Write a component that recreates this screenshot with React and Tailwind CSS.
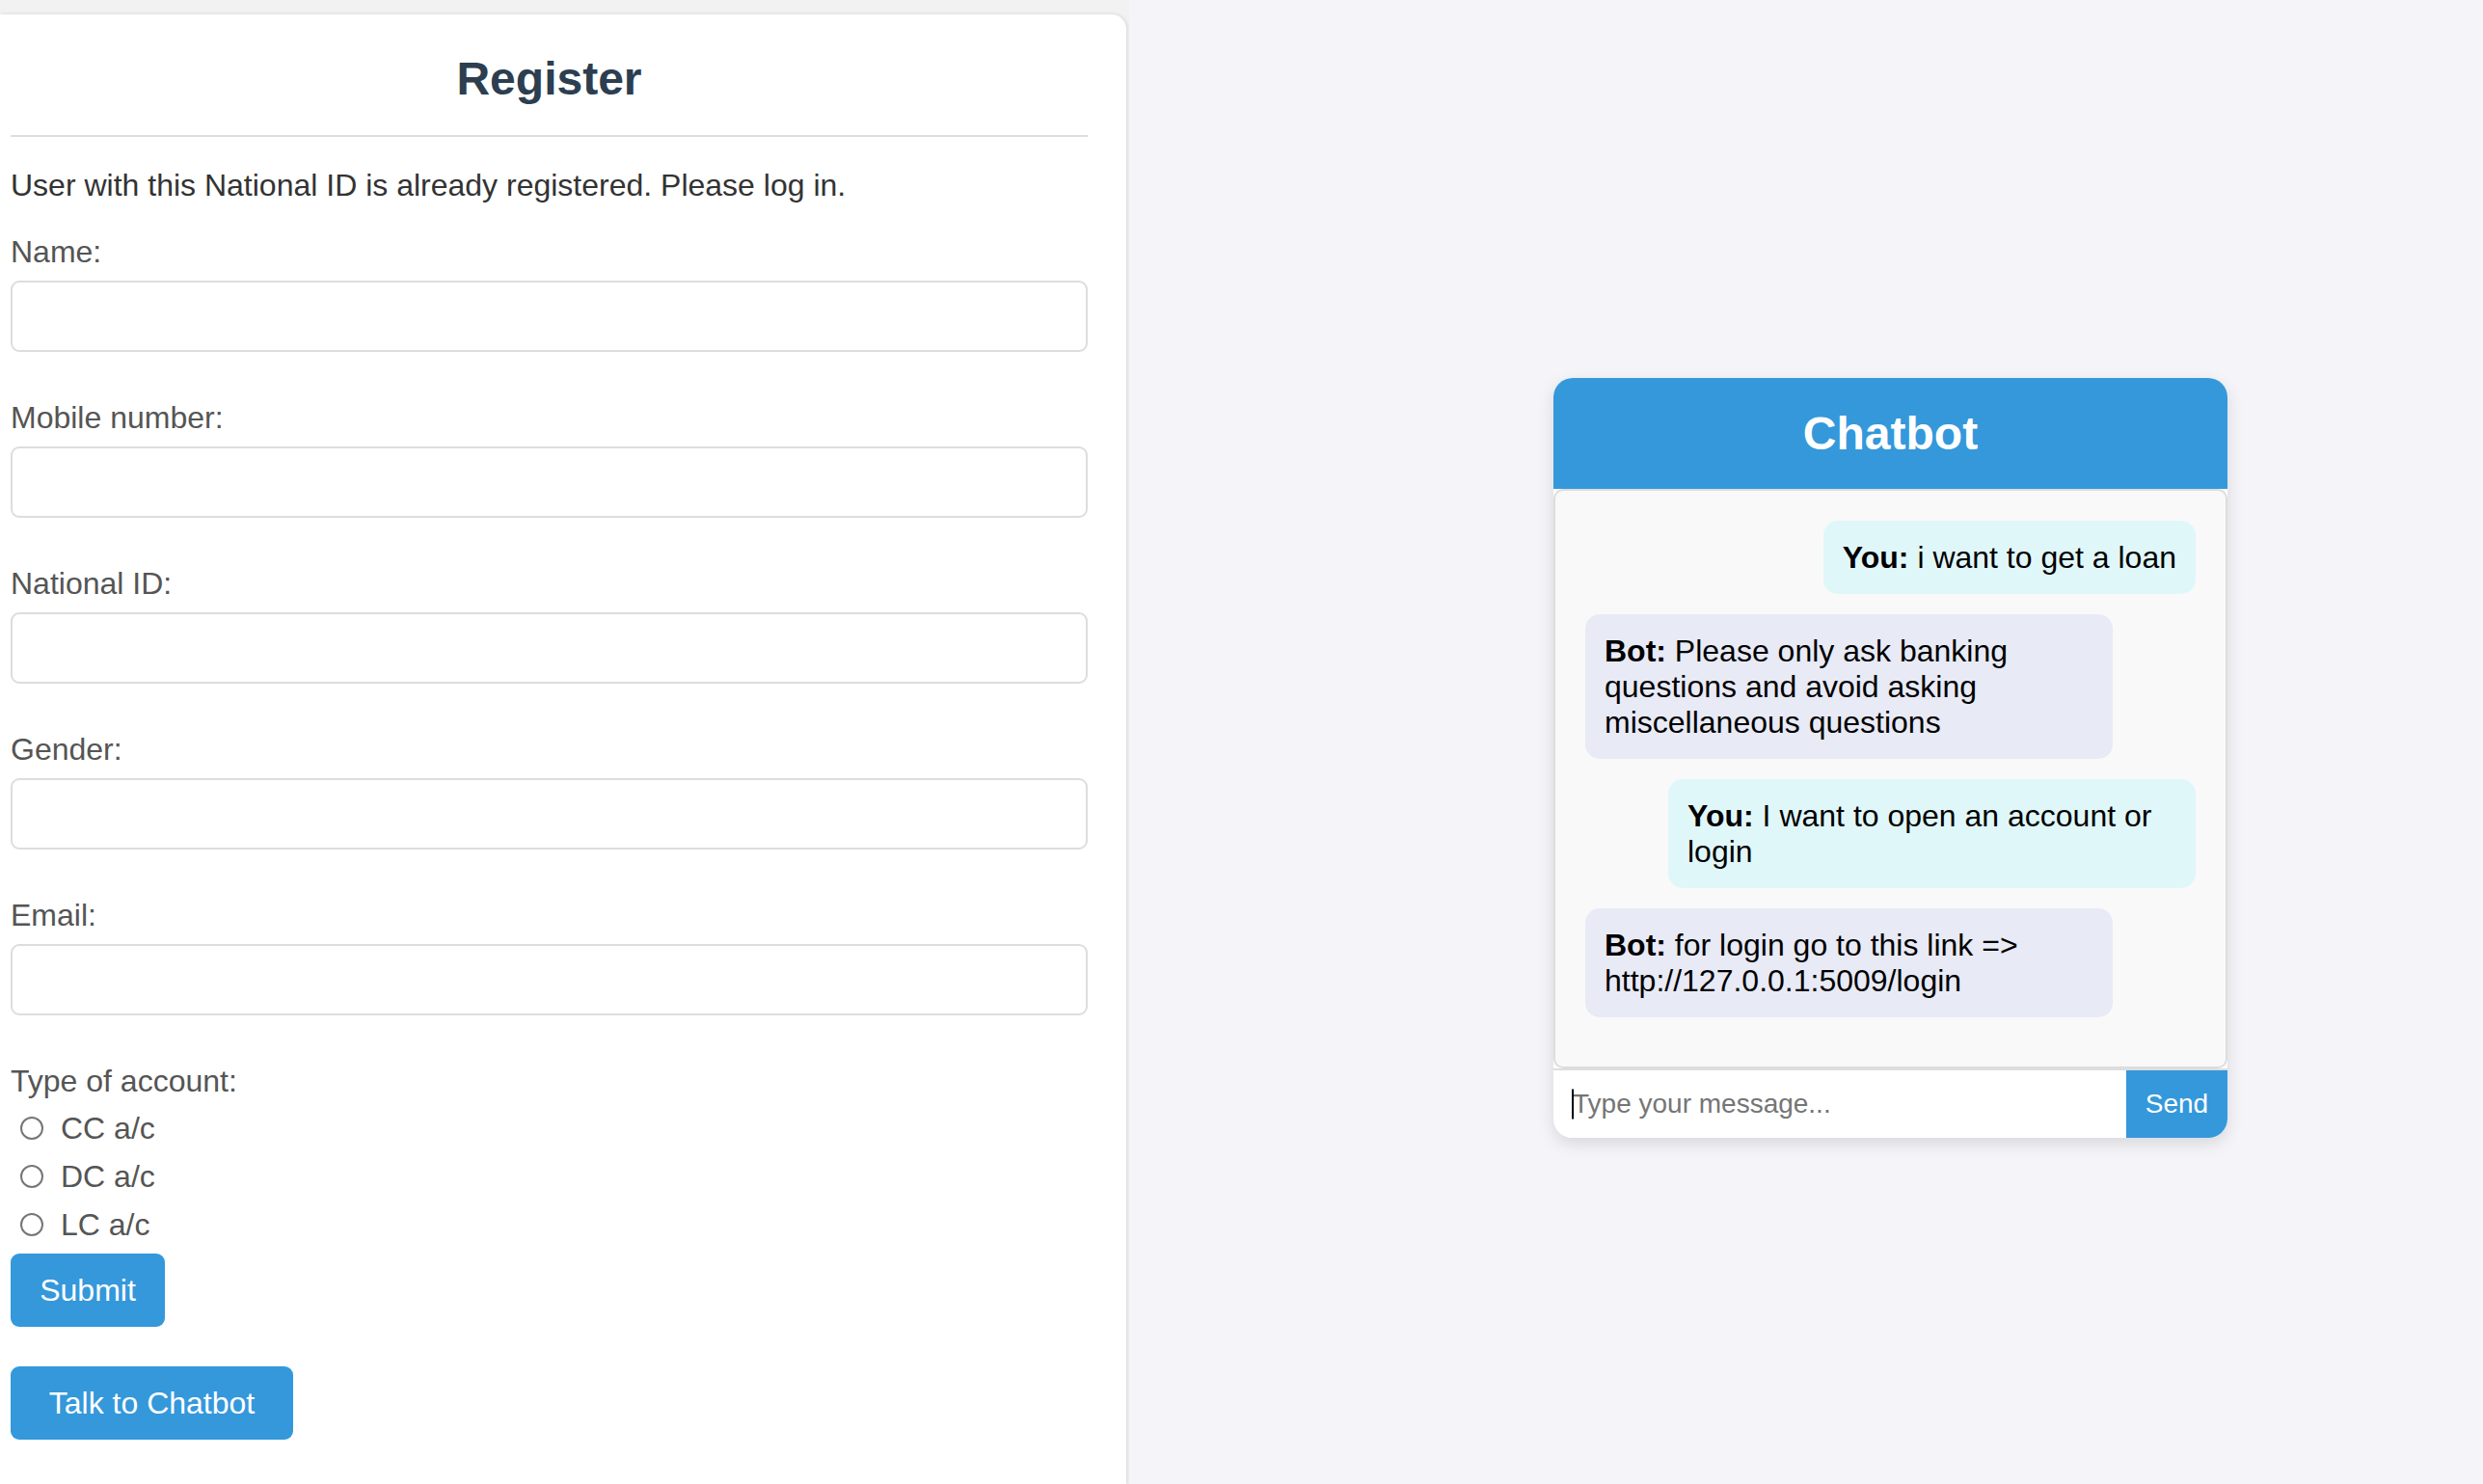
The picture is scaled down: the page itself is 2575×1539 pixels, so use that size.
export default function App() {
  const fields = ["Name:", "Mobile number:", "National ID:", "Gender:", "Email:"];
  const accounts = ["CC a/c", "DC a/c", "LC a/c"];
  return (
    <div className="flex h-[1539px] w-[2575px] overflow-hidden font-['Liberation_Sans',Arial,sans-serif]">
      {/* Left: register form */}
      <div className="w-[1171px] shrink-0 bg-[#f2f2f2] pt-[15px]">
        <div className="h-full w-[1168px] rounded-tr-[15px] bg-white pl-[11px] pr-[40px] pt-[40px] shadow-[1px_0_4px_rgba(0,0,0,0.12)]">
          <h2 className="border-b-2 border-[#ddd] pb-[32px] text-center text-[48px] font-bold leading-[53px] text-[#2c3e50]">
            Register
          </h2>
          <p className="mt-[33px] text-[32px] leading-[35px] text-[#333]">
            User with this National ID is already registered. Please log in.
          </p>
          <div className="mt-[34px] flex flex-col gap-[51px]">
            {fields.map((f) => (
              <div key={f} className="flex flex-col">
                <label className="text-[32px] leading-[35px] text-[#555]">{f}</label>
                <input
                  type="text"
                  className="mt-[12px] h-[74px] w-full rounded-[9px] border-2 border-[#ddd] bg-white px-[18px] text-[32px] outline-none"
                />
              </div>
            ))}
          </div>
          <div className="mt-[51px] text-[32px] leading-[35px] text-[#555]">Type of account:</div>
          <div className="mt-[6px] flex flex-col">
            {accounts.map((a) => (
              <label key={a} className="flex h-[50px] items-center text-[32px] leading-[35px] text-[#555]">
                <span className="ml-[10px] mr-[18px] inline-block h-[24px] w-[24px] rounded-full border-2 border-[#767676] bg-white" />
                {a}
              </label>
            ))}
          </div>
          <button className="mt-[5px] block h-[76px] w-[160px] rounded-[9px] bg-[#3498db] text-[32px] leading-[35px] text-white">
            Submit
          </button>
          <button className="mt-[41px] block h-[76px] w-[293px] rounded-[9px] bg-[#3498db] text-[32px] leading-[35px] text-white">
            Talk to Chatbot
          </button>
        </div>
      </div>

      {/* Right: chatbot */}
      <div className="flex-1 bg-[#f4f4f9] pl-[440px] pt-[392px]">
        <div className="flex w-[699px] flex-col overflow-hidden rounded-[20px] bg-white shadow-[0_6px_18px_rgba(0,0,0,0.12)]">
          <div className="flex h-[115px] items-center justify-center bg-[#3498db] text-[48px] font-bold leading-[48px] text-white">
            Chatbot
          </div>
          <div className="flex h-[601px] flex-col gap-[21px] rounded-[10px] border-2 border-[#ddd] bg-[#f9f9f9] p-[31px] text-[32px] leading-[37px] text-black">
            <div className="max-w-[547px] self-end rounded-[15px] bg-[#e0f7fa] px-[20px] py-[19.5px]">
              <strong>You:</strong> i want to get a loan
            </div>
            <div className="max-w-[547px] self-start rounded-[15px] bg-[#e8eaf6] px-[20px] py-[19.5px]">
              <strong>Bot:</strong> Please only ask banking questions and avoid asking miscellaneous questions
            </div>
            <div className="max-w-[547px] self-end rounded-[15px] bg-[#e0f7fa] px-[20px] py-[19.5px]">
              <strong>You:</strong> I want to open an account or login
            </div>
            <div className="w-[547px] self-start rounded-[15px] bg-[#e8eaf6] px-[20px] py-[19.5px]">
              <strong>Bot:</strong> for login go to this link =&gt; http://127.0.0.1:5009/login
            </div>
          </div>
          <div className="flex h-[72px] border-t-2 border-[#ddd]">
            <div className="relative flex-1">
              <input
                type="text"
                placeholder="Type your message..."
                className="h-full w-full bg-white pl-[20px] text-[28px] text-black outline-none placeholder:text-[#757575]"
              />
              <span className="absolute left-[19px] top-1/2 h-[31px] w-[2px] -translate-y-1/2 bg-black" />
            </div>
            <button className="w-[105px] bg-[#3498db] text-[28px] text-white">Send</button>
          </div>
        </div>
      </div>
    </div>
  );
}
